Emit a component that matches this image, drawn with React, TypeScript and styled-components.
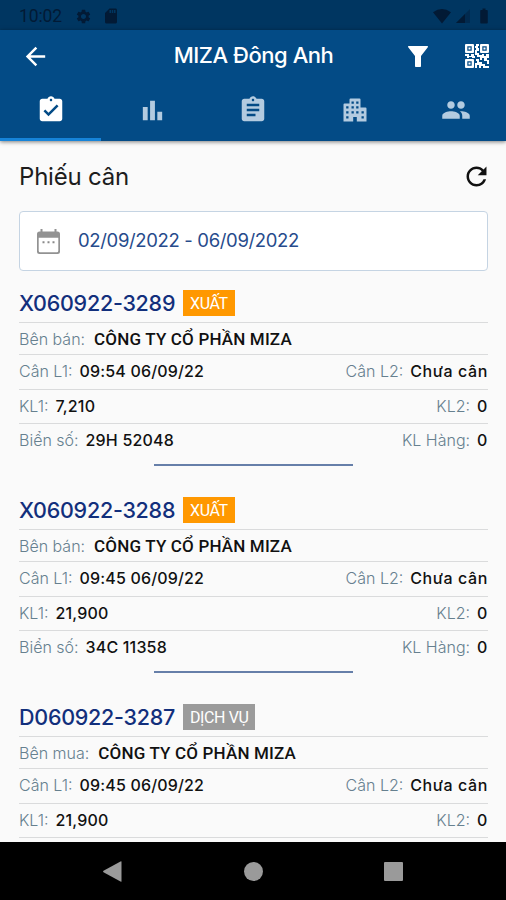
import React from "react";
import styled, { createGlobalStyle } from "styled-components";
import {
  MdAssignment,
  MdAssignmentTurnedIn,
  MdBarChart,
  MdPeople,
  MdSettings,
  MdSdCard,
  MdBatteryFull,
} from "react-icons/md";
import { IoMdArrowBack, IoMdRefresh } from "react-icons/io";

const GlobalStyle = createGlobalStyle`
  *, *::before, *::after { box-sizing: border-box; }
  body { margin: 0; background: #fafafa; font-family: Inter, "Noto Sans", sans-serif; }
  svg { display: block; flex: none; }
`;

const Screen = styled.div`
  width: 506px;
  height: 900px;
  display: flex;
  flex-direction: column;
  overflow: hidden;
  background: #fafafa;
`;

const StatusBar = styled.div`
  flex: none;
  height: 30px;
  padding: 2px 13px 0 19px;
  display: flex;
  align-items: center;
  background: #003661;
  color: #021a35;
`;

const Clock = styled.span`
  width: 56px;
  font: 400 17.5px/28px Roboto, sans-serif;
  letter-spacing: -0.1px;
  color: #021a35;
`;

const StatusGroup = styled.div<{ $gap: number; $end?: boolean }>`
  display: flex;
  align-items: center;
  gap: ${(p) => p.$gap}px;
  margin-left: ${(p) => (p.$end ? "auto" : "0")};
`;

const Header = styled.header`
  position: relative;
  flex: none;
  height: 111px;
  display: flex;
  flex-direction: column;
  background: #034b86;
  color: #fff;
  box-shadow: 0 1px 4px rgba(0, 0, 0, 0.5);
`;

const AppBar = styled.div`
  height: 52px;
  padding: 0 17px 0 21px;
  display: grid;
  grid-template-columns: 90px 1fr 90px;
  align-items: center;
`;

const AppTitle = styled.h1`
  margin: 0;
  padding-right: 3px;
  text-align: center;
  font-size: 22px;
  line-height: 28px;
  padding-bottom: 2px;
  font-weight: 500;
  letter-spacing: -0.45px;
  white-space: nowrap;
`;

const Actions = styled.div`
  display: flex;
  align-items: center;
  justify-content: flex-end;
  gap: 37px;
`;

const Tabs = styled.nav`
  flex: 1;
  display: grid;
  grid-template-columns: repeat(5, 1fr);
`;

const Tab = styled.div<{ $active?: boolean }>`
  display: flex;
  align-items: center;
  justify-content: center;
  padding-left: 1px;
  color: ${(p) => (p.$active ? "#fff" : "#b3cbe0")};
  border-bottom: 3px solid ${(p) => (p.$active ? "#1683d8" : "transparent")};
`;

const Content = styled.main`
  flex: 1;
  min-height: 0;
  overflow: hidden;
  padding: 0 18px 0 19px;
`;

const SectionHead = styled.div`
  height: 70px;
  padding-top: 1px;
  display: flex;
  align-items: center;
  justify-content: space-between;
  color: #111;
`;

const SectionTitle = styled.h2`
  margin: 0;
  font-size: 24px;
  line-height: 34px;
  font-weight: 400;
  letter-spacing: -0.2px;
  color: #1d1d1d;
`;

const RefreshButton = styled.span`
  display: flex;
  margin-right: -3px;
`;

const DateField = styled.div`
  height: 60px;
  margin-bottom: 13px;
  padding: 0 17px;
  display: flex;
  align-items: center;
  gap: 18px;
  background: #fff;
  border: 1.5px solid #c5d4e3;
  border-radius: 4px;
`;

const DateText = styled.span`
  font-size: 18.5px;
  line-height: 24px;
  letter-spacing: -0.35px;
  color: #274b8c;
  padding-bottom: 3px;
`;

const Card = styled.article`
  height: 207px;
  display: flex;
  flex-direction: column;
`;

const CardHead = styled.div`
  height: 39px;
  display: flex;
  align-items: center;
  gap: 8px;
  border-bottom: 1px solid #dadbdc;
`;

const Code = styled.span`
  width: 156px;
  font-size: 21.5px;
  line-height: 28px;
  font-weight: 500;
  letter-spacing: -0.25px;
  white-space: nowrap;
  color: #122f7c;
`;

const Badge = styled.span<{ $tone: "out" | "service" }>`
  height: 26px;
  padding: 0 7px;
  font: 400 16px/27px Roboto, sans-serif;
  letter-spacing: -0.4px;
  color: #fff;
  background: ${(p) => (p.$tone === "out" ? "#ff9800" : "#9b9b9b")};
`;

const Row = styled.div<{ $h: number; $last?: boolean }>`
  height: ${(p) => p.$h}px;
  display: flex;
  align-items: center;
  justify-content: space-between;
  padding-bottom: ${(p) => (p.$h > 32 ? 2 : 0)}px;
  border-bottom: ${(p) => (p.$last ? "0" : "1px solid #dadbdc")};
`;

const Field = styled.div<{ $gap?: number }>`
  display: flex;
  align-items: baseline;
  gap: ${(p) => p.$gap ?? 7}px;
  line-height: 22px;
  white-space: nowrap;
`;

const Label = styled.span`
  font-size: 16px;
  font-weight: 300;
  color: #66808f;
`;

const Value = styled.span<{ $wide?: boolean }>`
  font-size: 16px;
  font-weight: 500;
  letter-spacing: ${(p) => (p.$wide ? 0.6 : 0.17)}px;
  color: #111;
`;

const Company = styled.span`
  font: 500 17px/22px Roboto, sans-serif;
  letter-spacing: 0.17px;
  color: #111;
`;

const Divider = styled.div`
  width: 199px;
  height: 2px;
  margin: 6px auto 0;
  background: #667fa9;
`;

const NavBar = styled.footer`
  flex: none;
  height: 58px;
  padding: 0 103px 0 102px;
  display: flex;
  align-items: center;
  justify-content: space-between;
  background: #000;
  color: #9a9a9a;
`;

const WifiIcon = () => (
  <svg width="18" height="15" viewBox="0 0 18 15" fill="currentColor">
    <path d="M0 3.2Q9-3 18 3.2L9 14.5Z" />
  </svg>
);

const SignalIcon = () => (
  <svg width="14" height="14" viewBox="0 0 14 14" fill="currentColor">
    <path d="M14 0V14H0Z" opacity=".4" />
    <path d="M9 5V14H0Z" />
  </svg>
);

const FilterIcon = () => (
  <svg width="20" height="21" viewBox="0 0 20 21" fill="currentColor">
    <path d="M.6 0H19.4Q20.4.2 19.8 1.2L13 10V20.2Q13 21 12.2 21H7.8Q7 21 7 20.2V10L.2 1.2Q-.4.2.6 0Z" />
  </svg>
);

const QrIcon = () => (
  <svg width="24" height="24" viewBox="0 0 24 24" fill="currentColor">
    <path
      fillRule="evenodd"
      d="M1 0H8Q9 0 9 1V8Q9 9 8 9H1Q0 9 0 8V1Q0 0 1 0ZM2.300 2.300V6.700H6.700V2.300ZM16 0H23Q24 0 24 1V8Q24 9 23 9H16Q15 9 15 8V1Q15 0 16 0ZM17.300 2.300V6.700H21.700V2.300ZM1 15H8Q9 15 9 16V23Q9 24 8 24H1Q0 24 0 23V16Q0 15 1 15ZM2.300 17.300V21.700H6.700V17.300Z"
    />
    <path d="M3.500 3.500h2v2h-2zM18.500 3.500h2v2h-2zM3.500 18.500h2v2h-2zM11 0H14V2H13V4H14V7H12V9H14V11H17V10H19V12H21V10H24V14H22V16H24V20H22V17H19V14H17V16H15V13H12V11H10V6H11V4H10V2H11ZM0 10H4V12H6V10H9V12H10V14H7V13H4V14H2V12H0ZM11 15H14V18H17V20H20V22H24V24H18V22H16V24H14V21H12V24H10V19H12V17H11Z" />
  </svg>
);

const BuildingIcon = () => (
  <svg width="24" height="24" viewBox="0 0 24 24" fill="currentColor">
    <path
      fillRule="evenodd"
      d="M7.500.500H16.500Q17.500.500 17.500 1.500V9.500H22.500Q23.500 9.500 23.500 10.500V23.500H13.800V19H10.200V23.500H.500V6.500Q.500 5.500 1.500 5.500H6.500V1.500Q6.500.500 7.500.500ZM8.500 3.500V5.800H10.800V3.500ZM13.200 3.500V5.800H15.500V3.500ZM3.200 8.300V10.600H5.500V8.300ZM8.500 8.300V10.600H10.800V8.300ZM13.200 8.300V10.600H15.500V8.300ZM3.200 13.300V15.600H5.500V13.300ZM8.500 13.300V15.600H10.800V13.300ZM13.200 13.300V15.600H15.500V13.300ZM18.500 13.300V15.600H20.800V13.300ZM3.200 18.300V20.600H5.500V18.300ZM18.500 18.300V20.600H20.800V18.300Z"
    />
  </svg>
);

const CalendarIcon = () => (
  <svg width="23" height="25" viewBox="0 0 23 25">
    <path
      fill="#929292"
      fillRule="evenodd"
      d="M3.500 0H5.500V2.500H17.500V0H19.500V2.500H20.500Q23 2.500 23 5V22.500Q23 25 20.500 25H2.500Q0 25 0 22.500V5Q0 2.500 2.500 2.500H3.500ZM1.700 8.800V21.700Q1.700 23.200 3.200 23.200H19.800Q21.300 23.200 21.300 21.700V8.800Z"
    />
    <path fill="#8a8a8a" d="M5.500 12.200h2v2h-2zM10.500 12.200h2v2h-2zM15.500 12.200h2v2h-2z" />
  </svg>
);

const BackTriangle = () => (
  <svg width="20" height="21" viewBox="0 0 20 21" fill="currentColor">
    <path d="M19.500.8V20.200Q19.500 21 18.500 20.600L1.500 11.200Q.5 10.500 1.500 9.800L18.500.4Q19.500 0 19.500.8Z" />
  </svg>
);

const HomeCircle = styled.span`
  width: 19px;
  height: 19px;
  border-radius: 50%;
  background: currentColor;
`;

const RecentSquare = styled.span`
  width: 19px;
  height: 19px;
  border-radius: 1px;
  background: currentColor;
`;

type Ticket = {
  code: string;
  tone: "out" | "service";
  tag: string;
  partyLabel: string;
  time: string;
  weight: string;
  plate?: string;
};

const tickets: Ticket[] = [
  { code: "X060922-3289", tone: "out", tag: "XUẤT", partyLabel: "Bên bán:", time: "09:54 06/09/22", weight: "7,210", plate: "29H 52048" },
  { code: "X060922-3288", tone: "out", tag: "XUẤT", partyLabel: "Bên bán:", time: "09:45 06/09/22", weight: "21,900", plate: "34C 11358" },
  { code: "D060922-3287", tone: "service", tag: "DỊCH VỤ", partyLabel: "Bên mua:", time: "09:45 06/09/22", weight: "21,900" },
];

const Pair = ({ label, value, wide }: { label: string; value: string; wide?: boolean }) => (
  <Field>
    <Label>{label}</Label>
    <Value $wide={wide}>{value}</Value>
  </Field>
);

const TicketCard = ({ t }: { t: Ticket }) => (
  <Card>
    <CardHead>
      <Code>{t.code}</Code>
      <Badge $tone={t.tone}>{t.tag}</Badge>
    </CardHead>
    <Row $h={32}>
      <Field $gap={9}>
        <Label>{t.partyLabel}</Label>
        <Company>CÔNG TY CỔ PHẦN MIZA</Company>
      </Field>
    </Row>
    <Row $h={35}>
      <Pair label="Cân L1:" value={t.time} />
      <Pair label="Cân L2:" value="Chưa cân" wide />
    </Row>
    <Row $h={34}>
      <Pair label="KL1:" value={t.weight} />
      <Pair label="KL2:" value="0" wide />
    </Row>
    {t.plate && (
      <>
        <Row $h={34} $last>
          <Pair label="Biển số:" value={t.plate} />
          <Pair label="KL Hàng:" value="0" wide />
        </Row>
        <Divider />
      </>
    )}
  </Card>
);

export default function App() {
  return (
    <Screen>
      <GlobalStyle />
      <StatusBar>
        <Clock>10:02</Clock>
        <StatusGroup $gap={10}>
          <MdSettings size={17} />
          <MdSdCard size={18} />
        </StatusGroup>
        <StatusGroup $gap={5} $end>
          <WifiIcon />
          <SignalIcon />
          <MdBatteryFull size={18} />
        </StatusGroup>
      </StatusBar>
      <Header>
        <AppBar>
          <IoMdArrowBack size={29} />
          <AppTitle>MIZA Đông Anh</AppTitle>
          <Actions>
            <FilterIcon />
            <QrIcon />
          </Actions>
        </AppBar>
        <Tabs>
          <Tab $active><MdAssignmentTurnedIn size={30} /></Tab>
          <Tab><MdBarChart size={29} /></Tab>
          <Tab><MdAssignment size={30} /></Tab>
          <Tab><BuildingIcon /></Tab>
          <Tab><MdPeople size={30} /></Tab>
        </Tabs>
      </Header>
      <Content>
        <SectionHead>
          <SectionTitle>Phiếu cân</SectionTitle>
          <RefreshButton>
            <IoMdRefresh size={29} />
          </RefreshButton>
        </SectionHead>
        <DateField>
          <CalendarIcon />
          <DateText>02/09/2022 - 06/09/2022</DateText>
        </DateField>
        {tickets.map((t) => (
          <TicketCard key={t.code} t={t} />
        ))}
      </Content>
      <NavBar>
        <BackTriangle />
        <HomeCircle />
        <RecentSquare />
      </NavBar>
    </Screen>
  );
}
